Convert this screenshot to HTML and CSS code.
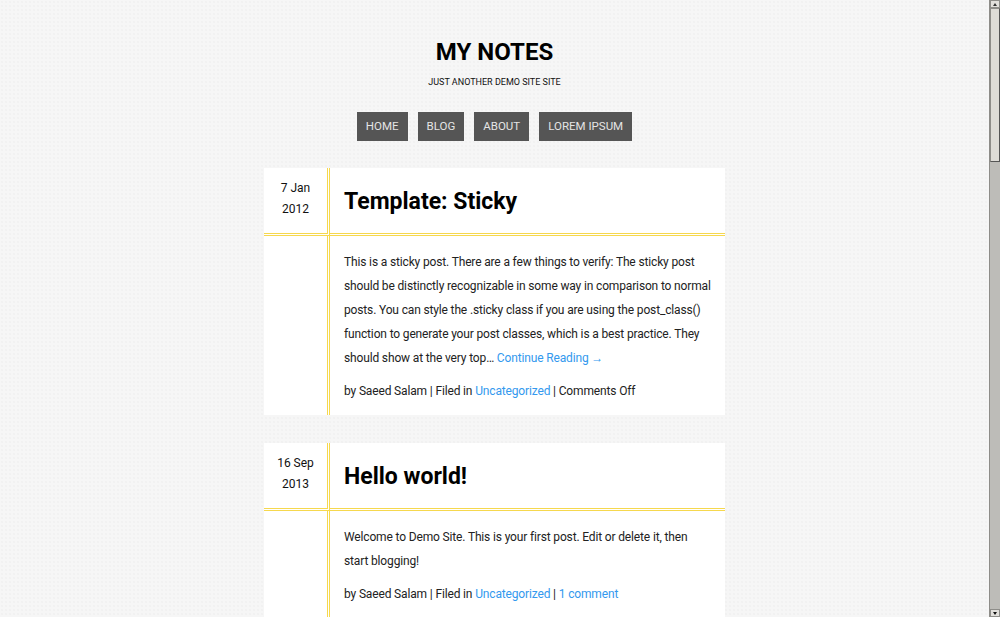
FILE: index.html
```html
<!DOCTYPE html>
<html lang="en">
<head>
<meta charset="utf-8">
<title>My Notes</title>
<link rel="stylesheet" href="styles.css">
</head>
<body>
<div class="page">
  <header class="site-header">
    <h1 class="site-title">MY NOTES</h1>
    <p class="tagline">JUST ANOTHER DEMO SITE SITE</p>
    <nav class="nav">
      <a class="nav-item" href="#">HOME</a>
      <a class="nav-item" href="#">BLOG</a>
      <a class="nav-item" href="#">ABOUT</a>
      <a class="nav-item" href="#">LOREM IPSUM</a>
    </nav>
  </header>
  <main class="posts">
    <article class="post">
      <div class="date">7 Jan<br>2012</div>
      <div class="title"><h2>Template: Sticky</h2></div>
      <div class="gutter"></div>
      <div class="body">
        <p>This is a sticky post. There are a few things to verify: The sticky post should be distinctly recognizable in some way in comparison to normal posts. You can style the .sticky class if you are using the post_class() function to generate your post classes, which is a best practice. They should show at the very top&hellip; <a href="#">Continue Reading &rarr;</a></p>
        <div class="meta">by Saeed Salam | Filed in <a href="#">Uncategorized</a> | Comments Off</div>
      </div>
    </article>
    <article class="post">
      <div class="date">16 Sep<br>2013</div>
      <div class="title"><h2>Hello world!</h2></div>
      <div class="gutter"></div>
      <div class="body">
        <p>Welcome to Demo Site. This is your first post. Edit or delete it, then start blogging!</p>
        <div class="meta">by Saeed Salam | Filed in <a href="#">Uncategorized</a> | <a href="#">1 comment</a></div>
      </div>
    </article>
  </main>
</div>
<div class="scrollbar">
  <div class="sb-btn sb-up"></div>
  <div class="sb-thumb"></div>
  <div class="sb-track"></div>
  <div class="sb-btn sb-down"></div>
</div>
</body>
</html>
```
FILE: styles.css
```css
html, body {
  margin: 0;
  padding: 0;
  height: 617px;
  overflow: hidden;
}
body {
  display: flex;
  background-color: #f6f6f6;
  background-image: radial-gradient(#ececec 0.6px, transparent 0.8px);
  background-size: 4px 4px;
  font-family: "Comic Sans MS", Roboto, sans-serif;
  color: #222;
}
.page {
  flex: 1;
  min-width: 0;
}
.site-header {
  text-align: center;
  padding-top: 37px;
}
.site-title {
  margin: 0;
  font-size: 24px;
  line-height: 30px;
  font-weight: 700;
  color: #000;
}
.tagline {
  margin: 9px 0 0;
  font-size: 9px;
  line-height: 12px;
  color: #111;
}
.nav {
  display: flex;
  justify-content: center;
  gap: 10px;
  margin-top: 24px;
}
.nav-item {
  display: block;
  height: 29px;
  line-height: 29px;
  padding: 0 9px;
  background: #555;
  color: #e4e4e4;
  font-size: 11.5px;
  text-decoration: none;
}
.posts {
  width: 461px;
  margin: 27px auto 0;
  display: flex;
  flex-direction: column;
  gap: 28px;
}
.post {
  display: grid;
  grid-template-columns: 66px 1fr;
  background: #fff;
}
.date {
  box-sizing: border-box;
  border-right: 3px double #f6d84e;
  border-bottom: 3px double #f6d84e;
  padding-top: 10px;
  text-align: center;
  font-size: 12px;
  line-height: 21px;
  color: #111;
}
.title {
  box-sizing: border-box;
  height: 68px;
  border-bottom: 3px double #f6d84e;
  display: flex;
  align-items: center;
  padding-left: 14px;
}
.title h2 {
  margin: 0;
  font-size: 23px;
  font-weight: 700;
  color: #000;
  line-height: 30px;
  padding-top: 2px;
}
.gutter {
  border-right: 3px double #f6d84e;
}
.body {
  padding: 14px 12px 13px 14px;
  font-size: 12px;
  letter-spacing: -0.15px;
  color: #222;
}
.body p {
  margin: 0 0 10px;
  line-height: 24px;
}
.meta {
  line-height: 22px;
}
.body a {
  color: #3399ee;
  text-decoration: none;
}
.scrollbar {
  width: 11px;
  height: 617px;
  display: flex;
  flex-direction: column;
  background: #bdbcb8;
  border-left: 1px solid #8e8d89;
  box-sizing: border-box;
}
.sb-btn {
  height: 8px;
  background: #e2e0dc;
  border: 1px solid #8e8d89;
  box-sizing: border-box;
  position: relative;
}
.sb-btn::after {
  content: "";
  position: absolute;
  left: 2px;
  border-left: 2px solid transparent;
  border-right: 2px solid transparent;
}
.sb-up::after {
  top: 2px;
  border-bottom: 3px solid #333;
}
.sb-down::after {
  top: 2px;
  border-top: 3px solid #111;
}
.sb-thumb {
  height: 154px;
  background: #dedcd7;
  border: 1px solid #8e8d89;
  border-right-color: #555;
  border-bottom-color: #555;
  box-sizing: border-box;
}
.sb-track {
  flex: 1;
}
```
